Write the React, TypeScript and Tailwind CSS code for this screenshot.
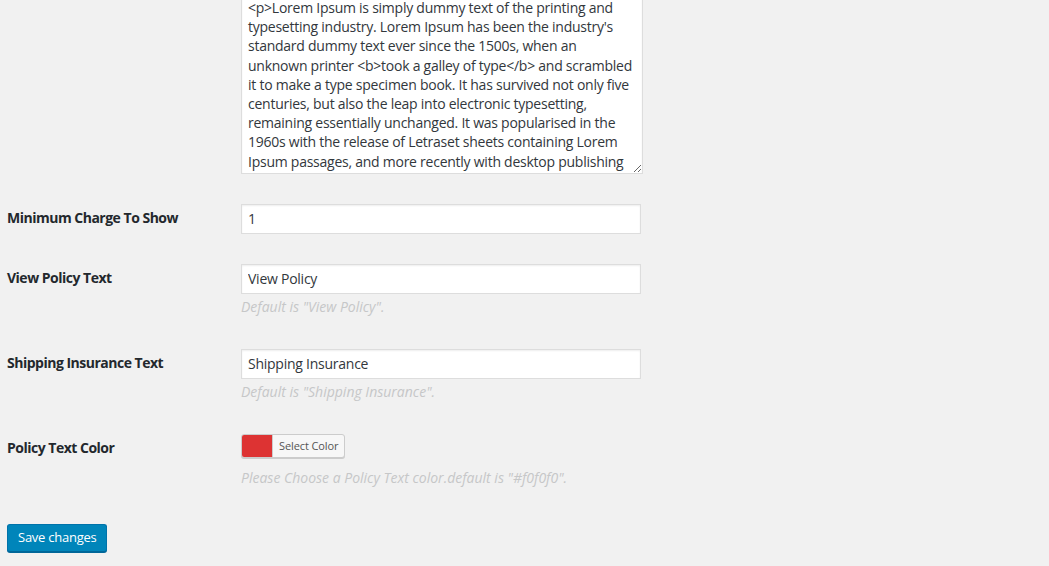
import { useState } from 'react';

// Shipping insurance settings form (WP admin style), page scrolled down a bit

const POLICY_TEXT = [
  '<p>Lorem Ipsum is simply dummy text of the printing and',
  "typesetting industry. Lorem Ipsum has been the industry's",
  'standard dummy text ever since the 1500s, when an',
  'unknown printer <b>took a galley of type</b> and scrambled',
  'it to make a type specimen book. It has survived not only five',
  'centuries, but also the leap into electronic typesetting,',
  'remaining essentially unchanged. It was popularised in the',
  '1960s with the release of Letraset sheets containing Lorem',
  'Ipsum passages, and more recently with desktop publishing',
].join('\n');

function Row({
  label,
  children,
}: {
  label?: string;
  children: React.ReactNode;
}) {
  return (
    <div className="flex">
      <div className="w-[234px] shrink-0 pt-[20px] pb-[20px] text-[14px] leading-[18px] font-bold tracking-[-0.5px] text-[#23282d]">
        {label}
      </div>
      <div className="py-[15px]">{children}</div>
    </div>
  );
}

function Description({ children }: { children: React.ReactNode }) {
  return (
    <p className="mt-[2px] mb-[2px] text-[14px] leading-[21px] italic text-[#c6c7c8]">
      {children}
    </p>
  );
}

export default function App() {
  const [policy, setPolicy] = useState(POLICY_TEXT);
  const [minCharge, setMinCharge] = useState('1');
  const [viewText, setViewText] = useState('View Policy');
  const [insuranceText, setInsuranceText] = useState('Shipping Insurance');

  const inputCls =
    'block h-[30px] w-[400px] border border-[#dddddd] bg-white px-[6px] pb-[1px] text-[14px] tracking-[-0.25px] text-[#32373c] shadow-[inset_0_1px_2px_rgba(0,0,0,0.07)] outline-none';

  return (
    <div
      className="min-h-screen w-full bg-[#f1f1f1] pl-[7px] text-[#444]"
      style={{ fontFamily: '"Open Sans", "Noto Sans", sans-serif' }}
    >
      <div className="flex">
        <div className="w-[234px] shrink-0" />
        <div className="pb-[15px]">
          <textarea
            value={policy}
            onChange={(e) => setPolicy(e.target.value)}
            wrap="off"
            className="-mt-[5px] block h-[179px] w-[402px] overflow-hidden border border-[#dddddd] bg-white px-[6px] py-[2px] text-[14px] leading-[19.2px] tracking-[-0.25px] text-[#32373c] shadow-[inset_0_1px_2px_rgba(0,0,0,0.07)] outline-none"
          />
        </div>
      </div>

      <Row label="Minimum Charge To Show">
        <input
          className={inputCls}
          value={minCharge}
          onChange={(e) => setMinCharge(e.target.value)}
        />
      </Row>

      <Row label="View Policy Text">
        <input
          className={inputCls}
          value={viewText}
          onChange={(e) => setViewText(e.target.value)}
        />
        <Description>Default is "View Policy".</Description>
      </Row>

      <Row label="Shipping Insurance Text">
        <input
          className={inputCls}
          value={insuranceText}
          onChange={(e) => setInsuranceText(e.target.value)}
        />
        <Description>Default is "Shipping Insurance".</Description>
      </Row>

      <Row label="Policy Text Color">
        <button
          type="button"
          className="mb-[9px] flex h-[24px] overflow-hidden rounded-[3px] border border-[#cccccc] bg-[#f7f7f7] shadow-[0_1px_0_#cccccc]"
        >
          <span className="h-full w-[30px] bg-[#dd3333]" />
          <span className="flex h-full items-center border-l border-[#cccccc] px-[6px] text-[11px] tracking-[-0.1px] text-[#555]">
            Select Color
          </span>
        </button>
        <Description>Please Choose a Policy Text color.default is "#f0f0f0".</Description>
      </Row>

      <div className="pt-[19px]">
        <button
          type="button"
          className="h-[28px] rounded-[3px] border border-[#0073aa] border-b-[#006799] bg-[#0085ba] px-[10px] text-[13px] tracking-[-0.25px] text-white shadow-[0_1px_0_#006799]"
        >
          Save changes
        </button>
      </div>
    </div>
  );
}
